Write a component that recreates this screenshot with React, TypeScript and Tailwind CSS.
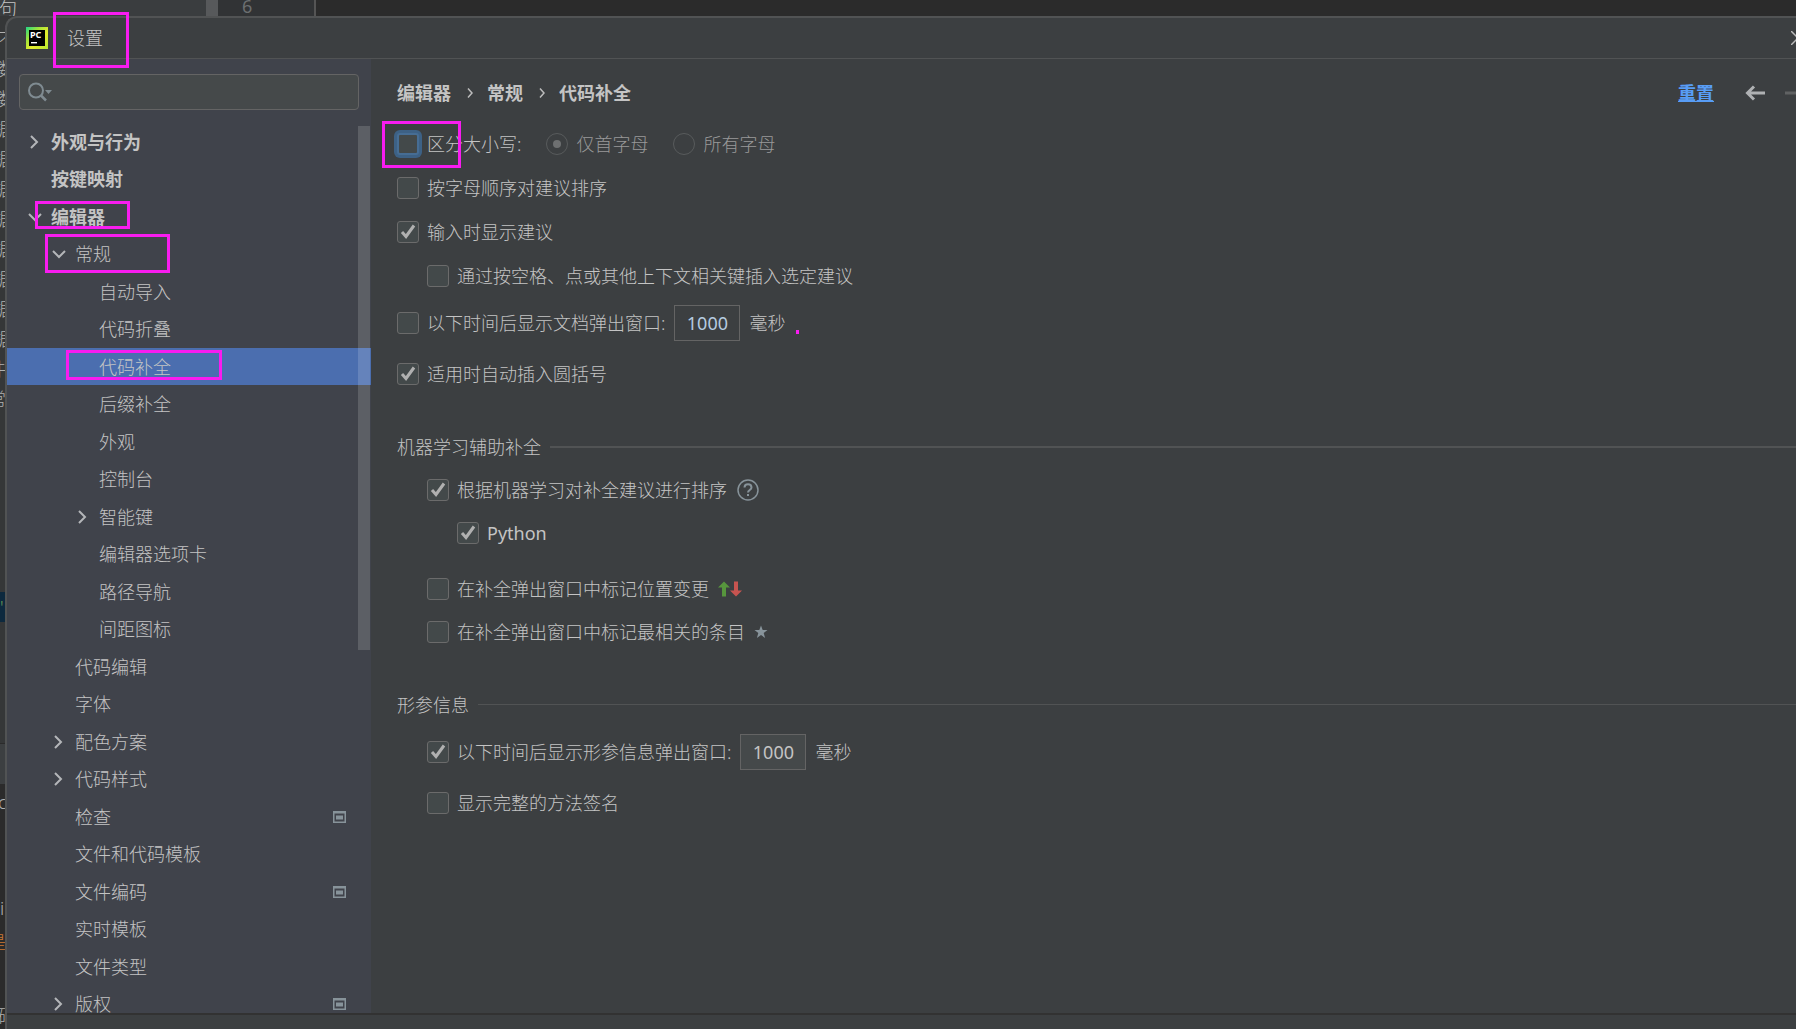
import React from 'react'
import clsx from 'clsx'

interface TreeItem {
  label: string
  level: 0 | 1 | 2
  state?: 'open' | 'closed'
  selected?: boolean
  perProject?: boolean
}

const TREE: TreeItem[] = [
  { label: '外观与行为', level: 0, state: 'closed' },
  { label: '按键映射', level: 0 },
  { label: '编辑器', level: 0, state: 'open' },
  { label: '常规', level: 1, state: 'open' },
  { label: '自动导入', level: 2 },
  { label: '代码折叠', level: 2 },
  { label: '代码补全', level: 2, selected: true },
  { label: '后缀补全', level: 2 },
  { label: '外观', level: 2 },
  { label: '控制台', level: 2 },
  { label: '智能键', level: 2, state: 'closed' },
  { label: '编辑器选项卡', level: 2 },
  { label: '路径导航', level: 2 },
  { label: '间距图标', level: 2 },
  { label: '代码编辑', level: 1 },
  { label: '字体', level: 1 },
  { label: '配色方案', level: 1, state: 'closed' },
  { label: '代码样式', level: 1, state: 'closed' },
  { label: '检查', level: 1, perProject: true },
  { label: '文件和代码模板', level: 1 },
  { label: '文件编码', level: 1, perProject: true },
  { label: '实时模板', level: 1 },
  { label: '文件类型', level: 1 },
  { label: '版权', level: 1, state: 'closed', perProject: true },
]

const INDENT = ['pl-5', 'pl-11', 'pl-[68px]']

// pink boxes drawn over the dialog
const MARKS = [
  'left-[53px] top-3 w-[76px] h-14',
  'left-[35px] top-[201px] w-[95px] h-7',
  'left-[45px] top-[234px] w-[125px] h-[39px]',
  'left-[66px] top-[350px] w-[156px] h-[30px]',
  'left-[382px] top-[121px] w-[79px] h-[47px]',
]

// text of the editor window that peeks out on the left
const BEHIND = ['不', '数', '数', '据', '据', '据', '据', '据', '据', '据', '据', '件', '常']

function Chevron({ open }: { open: boolean }) {
  return (
    <svg viewBox="0 0 16 16" className="w-4 h-4 shrink-0" fill="none" stroke="#b4b6b9" strokeWidth="2">
      <path d={open ? 'M2 5l6 6 6-6' : 'M4 2l6 6-6 6'} />
    </svg>
  )
}

function ProjectIcon() {
  return (
    <svg viewBox="0 0 13 12" className="w-[13px] h-3 shrink-0" fill="#87939a">
      <path fillRule="evenodd" d="M0 0h13v12H0zM1.500 2.500v8h10v-8z" />
      <path d="M3 4.500h7v4H3z" />
    </svg>
  )
}

function Logo() {
  return (
    <svg viewBox="0 0 22 22" className="w-[22px] h-[22px] shrink-0">
      <defs>
        <linearGradient id="pc" x1="0" y1="0" x2="1" y2="1">
          <stop offset="0" stopColor="#21d789" />
          <stop offset="0.3" stopColor="#9be33c" />
          <stop offset="0.6" stopColor="#e6ec2c" />
          <stop offset="1" stopColor="#b5e832" />
        </linearGradient>
      </defs>
      <rect width="22" height="22" fill="url(#pc)" />
      <rect x="3" y="3" width="16" height="16" fill="#000" />
      <text x="4" y="11" fill="#fff" fontSize="9" fontWeight="700" fontFamily="Noto Sans, sans-serif">PC</text>
      <rect x="5" y="15" width="6" height="1.4" fill="#fff" />
    </svg>
  )
}

interface CheckProps {
  label: string
  checked?: boolean
  focused?: boolean
  className?: string
  children?: React.ReactNode
}

function Check({ label, checked = false, focused = false, className = 'h-[43px]', children }: CheckProps) {
  return (
    <div className={clsx('flex items-center', className)}>
      <label className="flex items-center gap-2">
        <span className="relative w-[22px] h-[22px] shrink-0">
          <input
            type="checkbox"
            defaultChecked={checked}
            className={clsx(
              'peer block appearance-none w-[22px] h-[22px] rounded-[3px] border bg-[#43494a] outline-none',
              focused ? 'border-2 border-[#466d94] ring-3 ring-[#3d6185]' : 'border-[#6b6b6b]',
            )}
          />
          <svg
            viewBox="0 0 22 22"
            className="absolute inset-0 hidden peer-checked:block pointer-events-none"
            fill="none"
            stroke="#b0b0b0"
            strokeWidth="3"
          >
            <path d="M5 11l4 4.500L17 4.500" />
          </svg>
        </span>
        <span>{label}</span>
      </label>
      {children}
    </div>
  )
}

function Delay({ label, active }: { label: string; active?: boolean }) {
  return (
    <>
      <input
        type="text"
        aria-label={label}
        defaultValue="1000"
        className={clsx(
          'ml-[9px] mr-[9px] w-[66px] h-9 border border-[#646464] text-center font-normal outline-none',
          active ? 'bg-[#45494a]' : 'bg-[#3c3f41] text-[#b5cbe0]',
        )}
      />
      <span>毫秒</span>
    </>
  )
}

function Radio({ label, checked }: { label: string; checked?: boolean }) {
  return (
    <label className="ml-[25px] flex items-center gap-2 text-[#999999]">
      <span className="relative w-[22px] h-[22px]">
        <input
          type="radio"
          name="case"
          disabled
          defaultChecked={checked}
          className="peer block appearance-none w-[22px] h-[22px] rounded-full border border-[#585b5c]"
        />
        <span className="absolute inset-[7px] hidden peer-checked:block rounded-full bg-[#6e7071]" />
      </span>
      {label}
    </label>
  )
}

function SectionTitle({ children, thick }: { children: React.ReactNode; thick?: boolean }) {
  return (
    <div className="mt-[30px] h-[43px] flex items-center gap-[9px]">
      <h2>{children}</h2>
      <div className={clsx('flex-1 bg-[#515354]', thick ? 'h-0.5' : 'h-px')} />
    </div>
  )
}

function Sidebar() {
  return (
    <aside className="relative w-[364px] shrink-0 bg-[#40434b] overflow-hidden">
      <div className="mx-3 mt-[15px] h-9 flex items-center rounded border border-[#646464] bg-[#45494a]">
        <svg viewBox="0 0 26 20" className="ml-2 w-[26px] h-5 shrink-0" fill="none" stroke="#7f8b91" strokeWidth="2">
          <circle cx="8" cy="8.5" r="7" />
          <path d="M13 13.500l5 5" strokeWidth="2.5" />
          <path d="M17 8h7l-3.500 4z" fill="#7f8b91" stroke="none" />
        </svg>
        <input type="search" aria-label="搜索" className="flex-1 min-w-0 bg-transparent outline-none" />
      </div>
      <ul className="mt-[13px]">
        {TREE.map((item, idx) => (
          <li
            key={idx}
            className={clsx(
              'flex items-center gap-2 pr-[25px] odd:h-[37px] even:h-[38px]',
              INDENT[item.level],
              item.level === 0 && 'font-bold',
              item.selected && 'bg-[#4b6eaf]',
            )}
          >
            {item.state ? <Chevron open={item.state === 'open'} /> : <span className="w-4 shrink-0" />}
            <span className="flex-1">{item.label}</span>
            {item.perProject && <ProjectIcon />}
          </li>
        ))}
      </ul>
      <div className="absolute right-px top-[67px] w-3 h-[524px] bg-white/15" />
    </aside>
  )
}

function Crumbs() {
  return (
    <header className="h-[62px] pt-1.5 flex items-center">
      <nav className="flex items-center font-bold">
        {['编辑器', '常规', '代码补全'].map((name, idx) => (
          <React.Fragment key={name}>
            {idx > 0 && (
              <svg viewBox="0 0 6 10" className="ml-4 mr-3.5 w-1.5 h-2.5" fill="none" stroke="#bbb" strokeWidth="1.5">
                <path d="M1 0.500l4 4.500-4 4.500" />
              </svg>
            )}
            <span>{name}</span>
          </React.Fragment>
        ))}
      </nav>
      <a href="#" className="ml-auto mr-[31px] font-bold text-[#589df6] underline underline-offset-1">重置</a>
      <button type="button" aria-label="后退">
        <svg viewBox="0 0 20 16" className="w-5 h-4" fill="none" stroke="#afb1b3" strokeWidth="3">
          <path d="M2 8h18M9 1.500L2.500 8 9 14.500" />
        </svg>
      </button>
      <button type="button" aria-label="前进" className="ml-5 -mr-[9px]" disabled>
        <svg viewBox="0 0 20 16" className="w-5 h-4" fill="none" stroke="#606263" strokeWidth="3">
          <path d="M0 8h18M12.500 1.500L19 8l-6.500 6.500" />
        </svg>
      </button>
    </header>
  )
}

function Settings() {
  return (
    <main className="flex-1 min-w-0 overflow-hidden">
      <div className="pl-[26px]">
        <Crumbs />
        <Check label="区分大小写:" focused className="h-[45px]">
          <Radio label="仅首字母" checked />
          <Radio label="所有字母" />
        </Check>
        <Check label="按字母顺序对建议排序" className="h-11" />
        <Check label="输入时显示建议" checked className="h-11" />
        <Check label="通过按空格、点或其他上下文相关键插入选定建议" className="h-[43px] ml-[30px]" />
        <Check label="以下时间后显示文档弹出窗口:" className="h-[52px] mb-[3px]">
          <Delay label="文档弹出窗口延迟" />
        </Check>
        <Check label="适用时自动插入圆括号" checked />

        <SectionTitle thick>机器学习辅助补全</SectionTitle>
        <div className="pl-[30px]">
          <Check label="根据机器学习对补全建议进行排序" checked>
            <button type="button" aria-label="帮助" className="ml-2.5">
              <svg viewBox="0 0 22 22" className="w-[22px] h-[22px]" fill="none" stroke="#87939a" strokeWidth="1.5">
                <circle cx="11" cy="11" r="10" />
                <path d="M7.500 8.500c0-4.500 7-4.500 7 0 0 2.500-3.500 2.500-3.500 5" strokeWidth="2" />
                <path d="M11 15v2" strokeWidth="2" />
              </svg>
            </button>
          </Check>
          <Check label="Python" checked className="h-[43px] ml-[30px] font-normal" />
          <Check label="在补全弹出窗口中标记位置变更" className="h-[43px] mt-[13px]">
            <svg viewBox="0 0 24 16" className="ml-[9px] w-6 h-4">
              <path d="M6 0.500l6 6H8v9H4v-9H0z" fill="#57963d" />
              <path d="M18 15.500l6-6h-4v-9h-4v9h-4z" fill="#c75450" />
            </svg>
          </Check>
          <Check label="在补全弹出窗口中标记最相关的条目">
            <svg viewBox="0 0 14 14" className="ml-[9px] w-3.5 h-3.5" fill="#87939a">
              <path d="M7 0.500l1.700 4.600h4.800L9.700 8l1.400 4.900L7 10l-4.100 2.900L4.300 8 0.500 5.100h4.800z" />
            </svg>
          </Check>
        </div>

        <SectionTitle>形参信息</SectionTitle>
        <div className="pl-[30px]">
          <Check label="以下时间后显示形参信息弹出窗口:" checked className="h-[52px] mb-[3px]">
            <Delay label="形参信息弹出窗口延迟" active />
          </Check>
          <Check label="显示完整的方法签名" />
        </div>
      </div>
    </main>
  )
}

export default function App() {
  return (
    <div className="relative h-screen flex flex-col overflow-hidden bg-[#2b2b2b] text-[18px] leading-6 text-[#c4c4c4] font-light font-['Noto_Sans','Noto_Sans_CJK_SC',sans-serif]">
      <div className="h-4 shrink-0 flex">
        <div className="w-[206px] bg-[#3a3d3f] leading-4 -indent-px">句</div>
        <div className="w-3 bg-[#57595b]" />
        <div className="w-[98px] bg-[#313335] border-r-2 border-[#555555] pl-6 leading-3 font-normal text-[#6b6e70]">6</div>
      </div>

      <div className="flex-1 min-h-0 flex bg-[#353738]">
        <div className="w-[5px] shrink-0 flex flex-col overflow-hidden text-[#b0b0b0]">
          <div className="pt-2">
            {BEHIND.map((ch, idx) => (
              <div
                key={idx}
                className={clsx('h-[30px] leading-[30px]', idx < 3 ? '-ml-0.5' : idx < 11 ? '-ml-1.5' : '-ml-3')}
              >
                {ch}
              </div>
            ))}
          </div>
          <div className="mt-[178px] h-[30px] shrink-0 bg-[#0d293e] leading-[30px] text-[#6a9955]">'</div>
          <div className="mt-[121px] h-[41px] shrink-0 border-t border-[#2b2b2b] bg-[#3c3f41]" />
          <div className="flex-1 bg-[#2b2b2b] flex flex-col">
            <div className="pt-1.5 h-[112px] shrink-0 -ml-0.5">c</div>
            <div className="h-[34px] shrink-0">i</div>
            <div className="h-[74px] shrink-0 -ml-3 text-[#cc7832]">是</div>
            <div className="shrink-0 -ml-0.5">码</div>
          </div>
        </div>

        <div className="flex-1 min-w-0 flex flex-col rounded-tl-xl border-t-2 border-l-2 border-[#515354] bg-[#3c3f41] overflow-hidden">
          <div className="h-[41px] shrink-0 pl-[19px] flex items-center border-b border-[#515354]">
            <Logo />
            <h1 className="ml-[19px]">设置</h1>
            <button type="button" aria-label="关闭" className="ml-auto -mr-[9px]">
              <svg viewBox="0 0 14 14" className="w-3.5 h-3.5" fill="none" stroke="#bbbbbb" strokeWidth="1.5">
                <path d="M0 0l14 14M14 0L0 14" />
              </svg>
            </button>
          </div>
          <div className="flex-1 min-h-0 flex">
            <Sidebar />
            <Settings />
          </div>
          <div className="h-4 shrink-0 border-t-2 border-[#323232]" />
        </div>
      </div>

      <div className="absolute inset-0 pointer-events-none">
        {MARKS.map((mark) => (
          <div key={mark} className={clsx('absolute border-3 border-[#f81cf0]', mark)} />
        ))}
        <div className="absolute left-[796px] top-[330px] w-[3px] h-1 bg-[#f81cf0]" />
      </div>
    </div>
  )
}
